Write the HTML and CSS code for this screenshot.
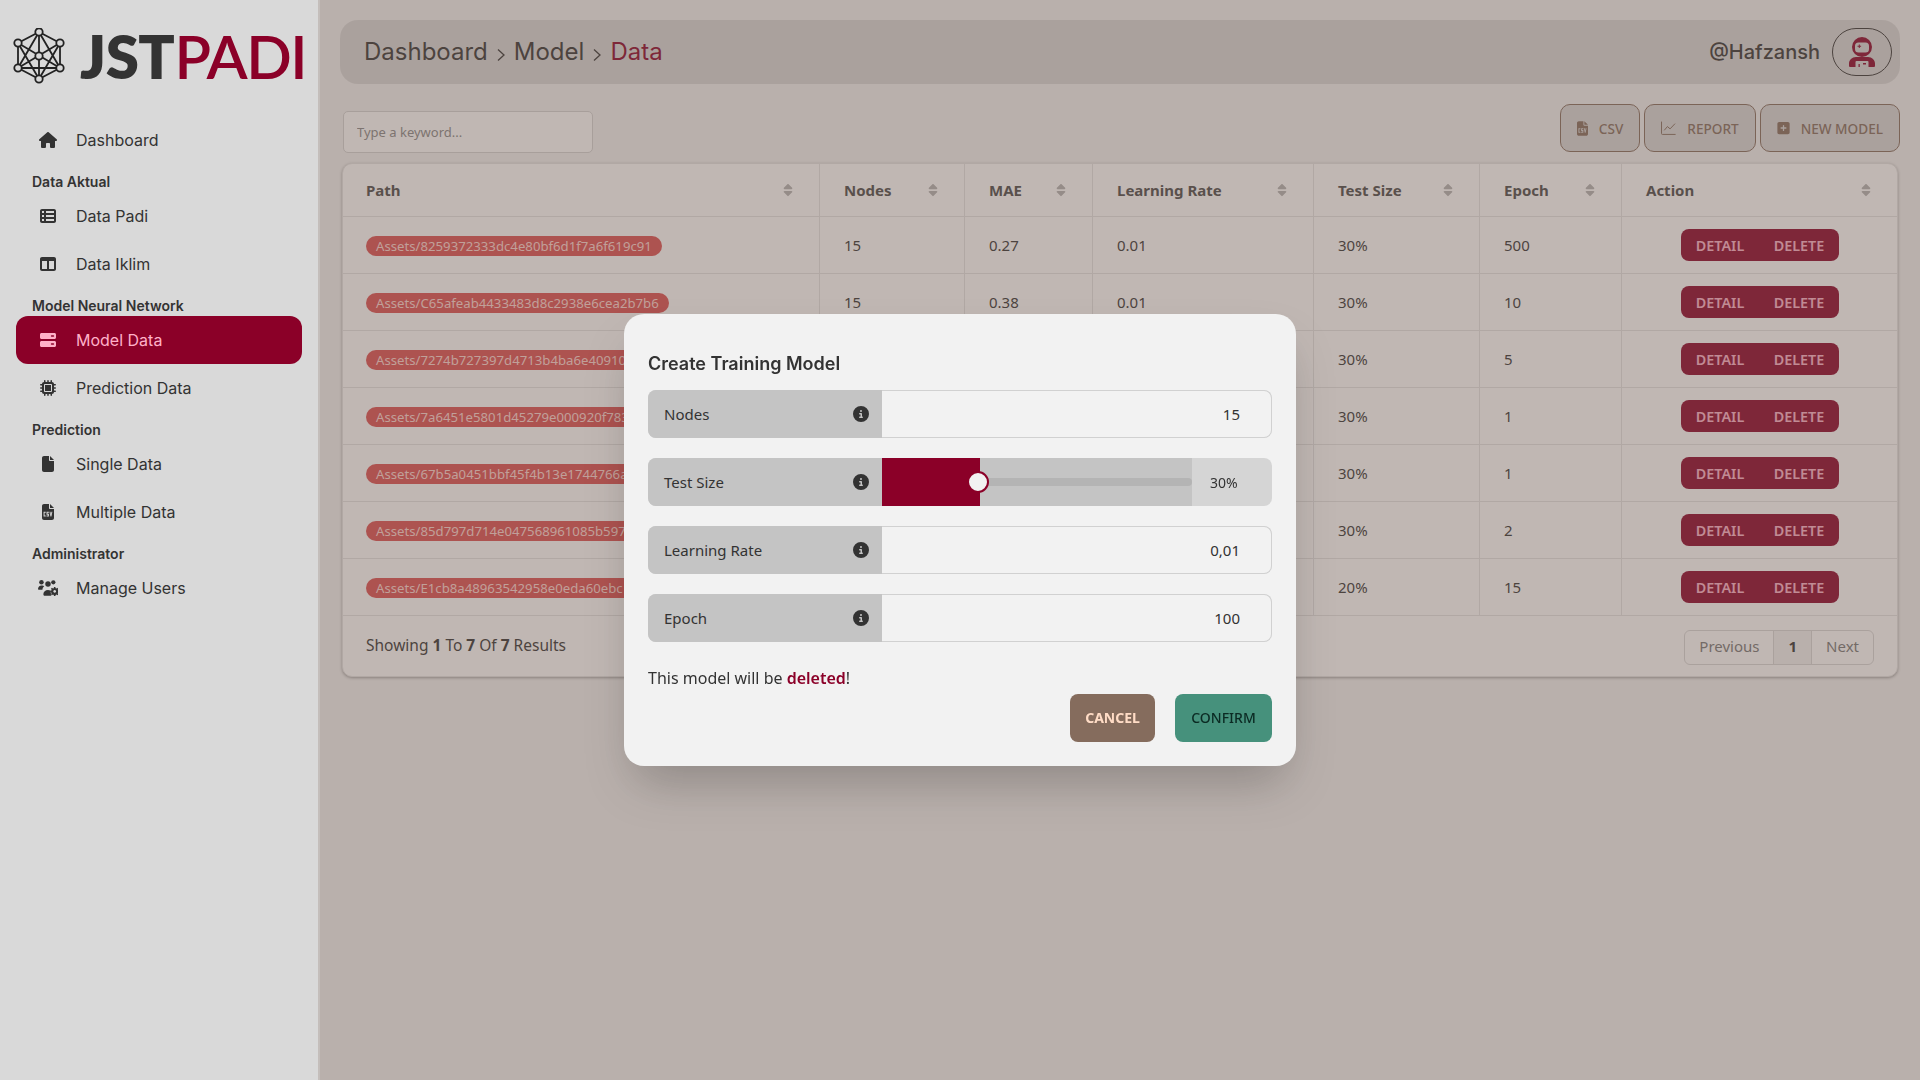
FILE: index.html
```html
<!DOCTYPE html>
<html lang="en">
<head>
    <meta charset="UTF-8">
    <meta name="viewport" content="width=device-width, initial-scale=1.0">
    <title>JSTPADI - Model Data</title>
    <link rel="stylesheet" href="styles.css">
</head>
<body>
    <!-- Icon sprites -->
    <svg class="sprites" xmlns="http://www.w3.org/2000/svg">
        <symbol id="i-sort" viewBox="0 0 320 512"><path d="M137.4 41.4c12.5-12.5 32.8-12.5 45.3 0l128 128c9.2 9.2 11.9 22.9 6.9 34.9s-16.6 19.8-29.6 19.8H32c-12.9 0-24.6-7.8-29.6-19.8s-2.7-25.7 6.9-34.9l128-128zm0 429.3l-128-128c-9.2-9.2-11.9-22.9-6.9-34.9s16.6-19.8 29.6-19.8H288c12.9 0 24.6 7.8 29.6 19.8s2.7 25.7-6.9 34.9l-128 128c-12.5 12.5-32.8 12.5-45.3 0z"/></symbol>
        <symbol id="i-info" viewBox="0 0 512 512"><path d="M256 512A256 256 0 1 0 256 0a256 256 0 1 0 0 512zM216 336h24V272H216c-13.3 0-24-10.7-24-24s10.7-24 24-24h48c13.3 0 24 10.7 24 24v88h8c13.3 0 24 10.7 24 24s-10.7 24-24 24H216c-13.3 0-24-10.7-24-24s10.7-24 24-24zm40-208a32 32 0 1 1 0 64 32 32 0 1 1 0-64z"/></symbol>
        <symbol id="i-csv" viewBox="0 0 384 512"><path fill-rule="evenodd" d="M64 0H224V128c0 17.700 14.300 32 32 32H384V448c0 35.300-28.700 64-64 64H64c-35.300 0-64-28.700-64-64V64C0 28.700 28.700 0 64 0zM384 128H256V0zM50 250v150h70v-30H82v-90h38v-30zM145 250v90h44v30h-44v30h76v-90h-44v-30h44v-30zM240 250l32 150h28l32-150h-32l-14 84-14-84z"/></symbol>
    </svg>

    <aside class="sidebar">
        <div class="logo">
            <svg class="logo-mark" viewBox="0 0 56 56" fill="none" stroke="#222" stroke-width="1.8">
                <path d="M26 4L47 15V40L26 51L5 40V15Z M26 4V51 M5 15L47 40 M47 15L5 40 M5 40H47 M26 4L5 40 M26 4L47 40 M26 51L5 15 M26 51L47 15"/>
                <circle cx="26" cy="4" r="3.700" fill="#d9d9d9"/>
                <circle cx="47" cy="15" r="3.700" fill="#d9d9d9"/>
                <circle cx="47" cy="40" r="3.700" fill="#d9d9d9"/>
                <circle cx="26" cy="51" r="3.700" fill="#d9d9d9"/>
                <circle cx="5" cy="40" r="3.700" fill="#d9d9d9"/>
                <circle cx="5" cy="15" r="3.700" fill="#d9d9d9"/>
                <circle cx="26" cy="28" r="3.700" fill="#d9d9d9"/>
            </svg>
            <div class="logo-text">JST<span>PADI</span></div>
        </div>

        <nav class="menu">
            <a class="menu-item">
                <span class="menu-icon"><svg width="18" viewBox="0 0 576 512"><path d="M575.8 255.5c0 18-15 32.1-32 32.1h-32l.7 160.2c0 2.7-.2 5.4-.5 8.1V472c0 22.1-17.9 40-40 40H456c-1.1 0-2.2 0-3.3-.1c-1.4 .1-2.8 .1-4.2 .1H416 392c-22.1 0-40-17.9-40-40V448 384c0-17.7-14.3-32-32-32H256c-17.7 0-32 14.3-32 32v64 24c0 22.1-17.9 40-40 40H160 128.1c-1.5 0-3-.1-4.5-.2c-1.2 .1-2.4 .2-3.6 .2H104c-22.1 0-40-17.9-40-40V360c0-.9 0-1.9 .1-2.8V287.6H32c-18 0-32-14-32-32.1c0-9 3-17 10-24L266.4 8c7-7 15-8 22-8s15 2 21 7L564.8 231.5c8 7 12 15 11 24z"/></svg></span>
                Dashboard
            </a>

            <div class="menu-title">Data Aktual</div>
            <a class="menu-item">
                <span class="menu-icon"><svg width="16" viewBox="0 0 512 512"><path d="M0 96C0 60.7 28.7 32 64 32H448c35.3 0 64 28.7 64 64V416c0 35.3-28.7 64-64 64H64c-35.3 0-64-28.7-64-64V96zm64 0v64h64V96H64zm384 0H192v64H448V96zM64 224v64h64V224H64zm384 0H192v64H448V224zM64 352v64h64V352H64zm384 0H192v64H448V352z"/></svg></span>
                Data Padi
            </a>
            <a class="menu-item">
                <span class="menu-icon"><svg width="16" viewBox="0 0 512 512"><path d="M0 96C0 60.7 28.7 32 64 32H448c35.3 0 64 28.7 64 64V416c0 35.3-28.7 64-64 64H64c-35.3 0-64-28.7-64-64V96zm64 64V416H224V160H64zm384 0H288V416H448V160z"/></svg></span>
                Data Iklim
            </a>

            <div class="menu-title">Model Neural Network</div>
            <a class="menu-item active">
                <span class="menu-icon"><svg width="16" viewBox="0 0 512 512"><path fill-rule="evenodd" d="M48 32H464c26 0 48 22 48 48v96c0 26-22 48-48 48H48c-26 0-48-22-48-48V80C0 54 22 32 48 32zM370 104a24 24 0 0 0 0 48h60a24 24 0 0 0 0-48zM48 288H464c26 0 48 22 48 48v96c0 26-22 48-48 48H48c-26 0-48-22-48-48V336c0-26 22-48 48-48zM370 360a24 24 0 0 0 0 48h60a24 24 0 0 0 0-48z"/></svg></span>
                Model Data
            </a>
            <a class="menu-item">
                <span class="menu-icon"><svg width="16" viewBox="0 0 512 512"><path d="M176 24c0-13.3-10.7-24-24-24s-24 10.7-24 24V64c-35.3 0-64 28.7-64 64H24c-13.3 0-24 10.7-24 24s10.7 24 24 24H64v56H24c-13.3 0-24 10.7-24 24s10.7 24 24 24H64v56H24c-13.3 0-24 10.7-24 24s10.7 24 24 24H64c0 35.3 28.7 64 64 64v40c0 13.3 10.7 24 24 24s24-10.7 24-24V448h56v40c0 13.3 10.7 24 24 24s24-10.7 24-24V448h56v40c0 13.3 10.7 24 24 24s24-10.7 24-24V448c35.3 0 64-28.7 64-64h40c13.3 0 24-10.7 24-24s-10.7-24-24-24H448V280h40c13.3 0 24-10.7 24-24s-10.7-24-24-24H448V176h40c13.3 0 24-10.7 24-24s-10.7-24-24-24H448c0-35.3-28.7-64-64-64V24c0-13.3-10.7-24-24-24s-24 10.7-24 24V64H280V24c0-13.3-10.7-24-24-24s-24 10.7-24 24V64H176V24zM160 128H352c17.7 0 32 14.3 32 32V352c0 17.7-14.3 32-32 32H160c-17.7 0-32-14.3-32-32V160c0-17.7 14.3-32 32-32zm192 32H160V352H352V160z"/></svg></span>
                Prediction Data
            </a>

            <div class="menu-title">Prediction</div>
            <a class="menu-item">
                <span class="menu-icon"><svg width="12" viewBox="0 0 384 512"><path d="M0 64C0 28.7 28.7 0 64 0H224V128c0 17.7 14.3 32 32 32H384V448c0 35.3-28.7 64-64 64H64c-35.3 0-64-28.7-64-64V64zm384 64H256V0L384 128z"/></svg></span>
                Single Data
            </a>
            <a class="menu-item">
                <span class="menu-icon"><svg width="12" height="16"><use href="#i-csv"/></svg></span>
                Multiple Data
            </a>

            <div class="menu-title">Administrator</div>
            <a class="menu-item">
                <span class="menu-icon"><svg width="20" viewBox="0 0 640 512"><circle cx="110" cy="75" r="72"/><circle cx="320" cy="125" r="88"/><circle cx="490" cy="75" r="68"/><path d="M0 290c0-62 48-112 110-112h30c22 0 42 7 58 18-34 26-54 66-56 114H22c-12 0-22-8-22-20zM172 450c0-80 62-132 148-132 28 0 54 6 76 16-4 34 4 66 18 92-6 30-2 52 12 74H200c-16 0-28-14-28-50z"/><path fill-rule="evenodd" d="M512 222h44l8 38 26 11 32-20 30 30-20 32 11 26 37 8v44l-37 8-11 26 20 32-30 30-32-20-26 11-8 38h-44l-8-38-26-11-32 20-30-30 20-32-11-26-37-8v-44l37-8 11-26-20-32 30-30 32 20 26-11zM534 320a44 44 0 1 0 .1 0z"/></svg></span>
                Manage Users
            </a>
        </nav>
    </aside>

    <main class="content">
        <header class="topbar">
            <div class="breadcrumb">
                <span>Dashboard</span>
                <svg class="crumb-arrow" viewBox="0 0 8 14"><path d="M1 1.5L7 7L1 12.5"/></svg>
                <span>Model</span>
                <svg class="crumb-arrow" viewBox="0 0 8 14"><path d="M1 1.5L7 7L1 12.5"/></svg>
                <span class="crumb-current">Data</span>
            </div>
            <div class="user">
                <span class="user-name">@Hafzansh</span>
                <div class="user-avatar">
                    <svg width="26" height="30" viewBox="0 0 26 30"><path fill-rule="evenodd" d="M13 0a10 10 0 0 1 10 10a10 10 0 0 1-20 0A10 10 0 0 1 13 0zM9.500 5.500a3.500 3.500 0 0 0-3.500 3.500v3a3.500 3.500 0 0 0 3.500 3.500h7a3.500 3.500 0 0 0 3.500-3.500V9a3.500 3.500 0 0 0-3.500-3.500zM9.800 7.500h1v1.300h1.300v1h-1.300v1.300h-1v-1.300H8.500v-1h1.300zM7 20h12c4 0 7 3 7 6.500V29a1 1 0 0 1-1 1H19.500V25a1 1 0 0 0-1-1H7.500a1 1 0 0 0-1 1V30H1a1 1 0 0 1-1-1V26.500C0 23 3 20 7 20zM9.500 27h1.300v3H9.500zM14 26h3v1.500h-3z"/></svg>
                </div>
            </div>
        </header>

        <div class="toolbar">
            <input class="search" type="text" placeholder="Type a keyword...">
            <div class="toolbar-actions">
                <button class="btn-outline"><svg width="11" height="15"><use href="#i-csv"/></svg>CSV</button>
                <button class="btn-outline"><svg width="15" height="14" viewBox="0 0 512 480" fill="none" stroke="currentColor" stroke-width="34"><path d="M17 20V430a30 30 0 0 0 30 30H500"/><path d="M110 320L220 190L310 270L480 90"/></svg>REPORT</button>
                <button class="btn-outline"><svg width="13" height="14" viewBox="0 0 448 512"><path d="M64 32C28.7 32 0 60.7 0 96V416c0 35.3 28.7 64 64 64H384c35.3 0 64-28.7 64-64V96c0-35.3-28.7-64-64-64H64zM200 344V280H136c-13.3 0-24-10.700-24-24s10.700-24 24-24h64V168c0-13.3 10.700-24 24-24s24 10.700 24 24v64h64c13.3 0 24 10.700 24 24s-10.700 24-24 24H248v64c0 13.3-10.700 24-24 24s-24-10.700-24-24z"/></svg>NEW MODEL</button>
            </div>
        </div>

        <section class="table-card">
            <table class="model-table">
                <colgroup>
                    <col class="col-path"><col class="col-nodes"><col class="col-mae"><col class="col-lr"><col class="col-test"><col class="col-epoch"><col class="col-action">
                </colgroup>
                <thead>
                    <tr>
                        <th><div class="th-inner">Path<svg class="sort"><use href="#i-sort"/></svg></div></th>
                        <th><div class="th-inner">Nodes<svg class="sort"><use href="#i-sort"/></svg></div></th>
                        <th><div class="th-inner">MAE<svg class="sort"><use href="#i-sort"/></svg></div></th>
                        <th><div class="th-inner">Learning Rate<svg class="sort"><use href="#i-sort"/></svg></div></th>
                        <th><div class="th-inner">Test Size<svg class="sort"><use href="#i-sort"/></svg></div></th>
                        <th><div class="th-inner">Epoch<svg class="sort"><use href="#i-sort"/></svg></div></th>
                        <th><div class="th-inner">Action<svg class="sort"><use href="#i-sort"/></svg></div></th>
                    </tr>
                </thead>
                <tbody>
                    <tr>
                        <td><span class="badge">Assets/8259372333dc4e80bf6d1f7a6f619c91</span></td>
                        <td>15</td><td>0.27</td><td>0.01</td><td>30%</td><td>500</td>
                        <td><div class="row-actions"><button>DETAIL</button><button>DELETE</button></div></td>
                    </tr>
                    <tr>
                        <td><span class="badge">Assets/C65afeab4433483d8c2938e6cea2b7b6</span></td>
                        <td>15</td><td>0.38</td><td>0.01</td><td>30%</td><td>10</td>
                        <td><div class="row-actions"><button>DETAIL</button><button>DELETE</button></div></td>
                    </tr>
                    <tr>
                        <td><span class="badge">Assets/7274b727397d4713b4ba6e40910</span></td>
                        <td></td><td></td><td></td><td>30%</td><td>5</td>
                        <td><div class="row-actions"><button>DETAIL</button><button>DELETE</button></div></td>
                    </tr>
                    <tr>
                        <td><span class="badge">Assets/7a6451e5801d45279e000920f783</span></td>
                        <td></td><td></td><td></td><td>30%</td><td>1</td>
                        <td><div class="row-actions"><button>DETAIL</button><button>DELETE</button></div></td>
                    </tr>
                    <tr>
                        <td><span class="badge">Assets/67b5a0451bbf45f4b13e1744766a</span></td>
                        <td></td><td></td><td></td><td>30%</td><td>1</td>
                        <td><div class="row-actions"><button>DETAIL</button><button>DELETE</button></div></td>
                    </tr>
                    <tr>
                        <td><span class="badge">Assets/85d797d714e047568961085b597</span></td>
                        <td></td><td></td><td></td><td>30%</td><td>2</td>
                        <td><div class="row-actions"><button>DETAIL</button><button>DELETE</button></div></td>
                    </tr>
                    <tr>
                        <td><span class="badge">Assets/E1cb8a48963542958e0eda60ebc</span></td>
                        <td></td><td></td><td></td><td>20%</td><td>15</td>
                        <td><div class="row-actions"><button>DETAIL</button><button>DELETE</button></div></td>
                    </tr>
                </tbody>
            </table>
            <div class="table-footer">
                <div class="results">Showing <b>1</b> To <b>7</b> Of <b>7</b> Results</div>
                <div class="pagination">
                    <button>Previous</button>
                    <button class="current">1</button>
                    <button>Next</button>
                </div>
            </div>
        </section>
    </main>

    <!-- Create model dialog -->
    <div class="overlay">
        <div class="modal">
            <h3 class="modal-title">Create Training Model</h3>

            <div class="field">
                <div class="field-label">Nodes<svg class="info"><use href="#i-info"/></svg></div>
                <input class="field-input" type="text" value="15">
            </div>
            <div class="field">
                <div class="field-label">Test Size<svg class="info"><use href="#i-info"/></svg></div>
                <input class="range" type="range" min="0" max="100" value="30">
                <div class="range-value">30%</div>
            </div>
            <div class="field">
                <div class="field-label">Learning Rate<svg class="info"><use href="#i-info"/></svg></div>
                <input class="field-input" type="text" value="0,01">
            </div>
            <div class="field">
                <div class="field-label">Epoch<svg class="info"><use href="#i-info"/></svg></div>
                <input class="field-input" type="text" value="100">
            </div>

            <p class="modal-note">This model will be <b>deleted</b>!</p>

            <div class="modal-actions">
                <button class="btn-cancel">CANCEL</button>
                <button class="btn-confirm">CONFIRM</button>
            </div>
        </div>
    </div>
</body>
</html>
```

FILE: styles.css
```css
* {
    box-sizing: border-box;
}

html, body {
    margin: 0;
    height: 1080px;
    overflow: hidden;
}

body {
    display: flex;
    font-family: "Noto Sans", sans-serif;
    color: #333;
    background-color: #f2f2f2;
}

button {
    font-family: inherit;
    cursor: pointer;
}

.sprites {
    display: none;
}

/* Sidebar */
.sidebar {
    position: relative;
    z-index: 20;
    flex: 0 0 320px;
    background-color: #d9d9d9;
    border-right: 2px solid #c4bebb;
}

.logo {
    display: flex;
    align-items: center;
    height: 116px;
    padding: 0 0 4px 13px;
}

.logo-mark {
    width: 56px;
    height: 56px;
    flex: none;
}

.logo-text {
    margin-left: 11px;
    font-family: Lato, sans-serif;
    font-size: 60px;
    font-weight: 800;
    line-height: 1;
    letter-spacing: -0.5px;
    color: #333;
}

.logo-text span {
    font-weight: 600;
    letter-spacing: -1.5px;
    color: #8b0028;
}

.menu {
    font-family: Inter, sans-serif;
}

.menu-item {
    display: flex;
    align-items: center;
    gap: 16px;
    height: 48px;
    margin: 0 16px;
    padding-left: 20px;
    border-radius: 12px;
    font-size: 16px;
    color: #333;
}

.menu-item.active {
    background-color: #8b0028;
    color: #ffb1c8;
}

.menu-icon {
    display: flex;
    align-items: center;
    justify-content: center;
    width: 24px;
    fill: currentColor;
}

.menu-title {
    height: 28px;
    padding: 8px 0 0 32px;
    font-size: 14px;
    font-weight: 600;
    line-height: 20px;
    color: #333;
}

/* Main area */
.content {
    flex: 1;
    min-width: 0;
    padding: 20px 20px 0;
}

.topbar {
    display: flex;
    align-items: center;
    justify-content: space-between;
    height: 64px;
    padding: 0 8px 0 24px;
    background-color: #d9d9d9;
    border-radius: 18px;
    font-family: Inter, sans-serif;
}

.breadcrumb {
    display: flex;
    align-items: center;
    gap: 8px;
    padding-bottom: 2px;
    font-size: 24px;
}

.crumb-arrow {
    width: 8px;
    height: 14px;
    margin: 7px 1px 0;
    fill: none;
    stroke: #333;
    stroke-width: 1.3;
}

.crumb-current {
    color: #8b0028;
}

.user {
    display: flex;
    align-items: center;
    gap: 12px;
}

.user-name {
    font-size: 20px;
    font-weight: 500;
}

.user-avatar {
    display: flex;
    align-items: center;
    justify-content: center;
    width: 60px;
    height: 48px;
    border: 1px solid #333;
    border-radius: 24px;
    fill: #8b0028;
}

.toolbar {
    display: flex;
    justify-content: space-between;
    height: 48px;
    margin-top: 20px;
}

.search {
    width: 250px;
    height: 42px;
    margin: 7px 0 0 3px;
    padding: 0 13px 1px;
    background-color: #fff;
    border: 1px solid #d4d4d4;
    border-radius: 5px;
    font-family: inherit;
    font-size: 13px;
}

.search::placeholder {
    color: #888;
}

.toolbar-actions {
    display: flex;
    gap: 4px;
}

.btn-outline {
    display: flex;
    align-items: center;
    gap: 11px;
    height: 48px;
    padding: 0 16px;
    background-color: #d9d9d9;
    border: 1px solid #856c5d;
    border-radius: 10px;
    font-size: 13.6px;
    font-weight: 500;
    color: #856c5d;
    fill: currentColor;
}

/* Table */
.table-card {
    margin: 11px 2px 0;
    background-color: #fff;
    border: 1px solid #e4e4e4;
    border-radius: 10px;
    box-shadow: 0 1px 3px rgba(0, 0, 0, 0.35);
    height: 514px;
}

.model-table {
    width: 1554px;
    table-layout: fixed;
    border-collapse: separate;
    border-spacing: 0;
    font-size: 15px;
}

.col-path { width: 477px; }
.col-nodes { width: 145px; }
.col-mae { width: 128px; }
.col-lr { width: 221px; }
.col-test { width: 166px; }
.col-epoch { width: 142px; }
.col-action { width: 275px; }

.model-table th,
.model-table td {
    padding: 0 24px;
    border-right: 1px solid #e4e4e4;
    border-bottom: 1px solid #e4e4e4;
    text-align: left;
}

.model-table th:first-child,
.model-table td:first-child {
    padding-left: 23px;
}

.model-table th:last-child,
.model-table td:last-child {
    border-right: none;
}

.model-table th {
    height: 53px;
    font-size: 15px;
    font-weight: 700;
    color: #4a4a4a;
}

.model-table td {
    height: 57px;
}

.th-inner {
    display: flex;
    align-items: center;
    justify-content: space-between;
}

.sort {
    flex: none;
    width: 10px;
    height: 14px;
    margin-right: 2px;
    fill: #b4b4b4;
}

.badge {
    display: inline-block;
    min-width: 290px;
    height: 20px;
    padding: 0 10px;
    background-color: #de4e50;
    border-radius: 10px;
    font-size: 13.2px;
    line-height: 20px;
    color: #ffd6d2;
    vertical-align: middle;
}

.row-actions {
    display: flex;
    width: 158px;
    height: 32px;
    margin: 0 auto;
    background-color: #8b0028;
    border-radius: 8px;
}

.row-actions button {
    flex: 1;
    padding: 0;
    background: none;
    border: none;
    font-size: 14.4px;
    font-weight: 600;
    color: #ffb1c8;
}

.table-footer {
    display: flex;
    align-items: center;
    justify-content: space-between;
    height: 60px;
    padding: 0 23px;
}

.results {
    padding-bottom: 2px;
    font-size: 15.5px;
}

.results b {
    font-weight: 700;
}

.pagination {
    display: flex;
    height: 35px;
    margin-top: 2px;
    border: 1px solid #d9d9d9;
    border-radius: 6px;
}

.pagination button {
    padding: 0 14px 2px;
    background: none;
    border: none;
    font-size: 15px;
    color: #777;
}

.pagination .current {
    background-color: #f2f2f2;
    border-left: 1px solid #d9d9d9;
    border-right: 1px solid #d9d9d9;
    font-weight: 700;
    color: #333;
}

/* Modal */
.overlay {
    position: fixed;
    inset: 0;
    z-index: 10;
    display: flex;
    align-items: center;
    justify-content: center;
    background-color: rgba(111, 89, 81, 0.437);
}

.modal {
    width: 672px;
    height: 452px;
    padding: 36px 24px 24px;
    background-color: #f2f2f2;
    border-radius: 20px;
    box-shadow: 0 25px 50px -12px rgba(0, 0, 0, 0.25);
}

.modal-title {
    margin: 0 0 12px;
    font-family: Inter, sans-serif;
    font-size: 18px;
    font-weight: 600;
    line-height: 28px;
    color: #333;
}

.field {
    display: flex;
    height: 48px;
    margin-bottom: 20px;
    border-radius: 8px;
    overflow: hidden;
    background-color: #d5d5d5;
}

.field-label {
    display: flex;
    align-items: center;
    justify-content: space-between;
    flex: 0 0 234px;
    padding: 0 13px 0 16px;
    background-color: #c4c4c4;
    font-size: 15px;
    color: #333;
}

.info {
    width: 16px;
    height: 16px;
    fill: #333;
}

.field-input {
    flex: 1;
    min-width: 0;
    padding: 0 31px 0 16px;
    background-color: #f2f2f2;
    border: 1px solid #d1d1d1;
    border-left: none;
    border-radius: 0 8px 8px 0;
    font-family: inherit;
    font-size: 15px;
    text-align: right;
    color: #333;
}

.range {
    flex: 0 0 310px;
    height: 48px;
    margin: 0;
    overflow: hidden;
    appearance: none;
    -webkit-appearance: none;
    background-color: #c4c4c4;
}

.range::-webkit-slider-runnable-track {
    height: 8px;
    background-color: #b4b4b4;
    border-radius: 4px;
}

.range::-webkit-slider-thumb {
    -webkit-appearance: none;
    width: 22px;
    height: 22px;
    margin-top: -7px;
    background-color: #f2f2f2;
    border: 2px solid #8b0028;
    border-radius: 50%;
    box-shadow: calc(-100vw - 9px) 0 0 100vw #8b0028;
    transform: translateX(-1px);
}

.range-value {
    flex: 1;
    align-self: center;
    padding-left: 18px;
    font-size: 14px;
}

.modal-note {
    margin: 25px 0 0;
    font-size: 16px;
    line-height: 22px;
    color: #333;
}

.modal-note b {
    font-weight: 600;
    color: #8b0028;
}

.modal-actions {
    display: flex;
    justify-content: flex-end;
    gap: 20px;
    margin-top: 5px;
}

.modal-actions button {
    height: 48px;
    padding: 0 0 2px;
    border: none;
    border-radius: 8px;
    font-size: 14px;
}

.btn-cancel {
    width: 85px;
    background-color: #856c5d;
    color: #ffdcc6;
    font-weight: 700;
}

.btn-confirm {
    width: 97px;
    background-color: #46917c;
    color: #0b2a23;
    font-weight: 500;
}
```
